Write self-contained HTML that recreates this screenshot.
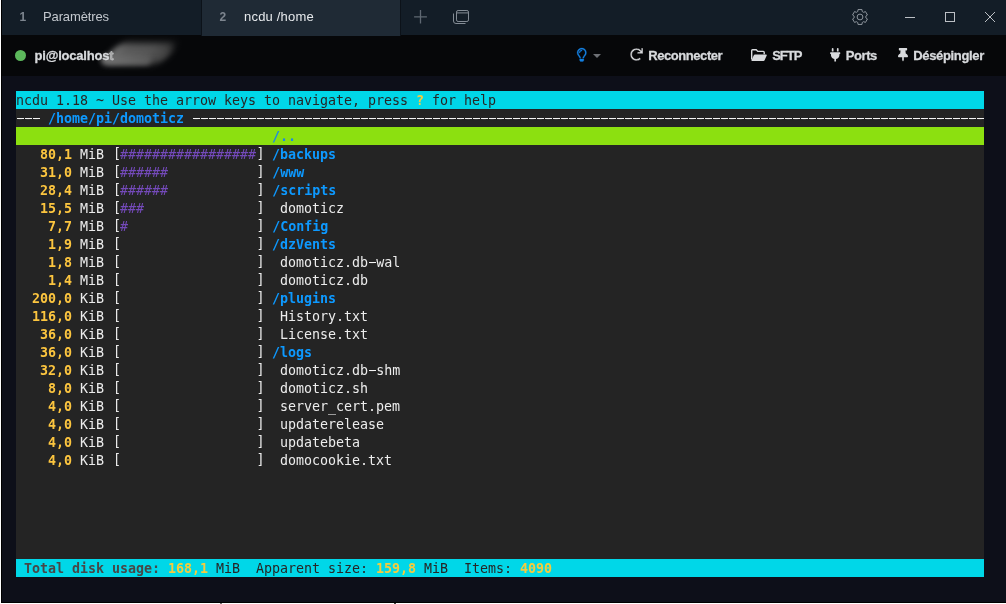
<!DOCTYPE html>
<html lang="fr">
<head>
<meta charset="utf-8">
<title>ncdu /home</title>
<style>
html,body{margin:0;padding:0;}
body{width:1006px;height:604px;overflow:hidden;background:#fff;position:relative;font-family:"Liberation Sans",sans-serif;}
#win{will-change:transform;position:absolute;left:1px;top:0;width:1005px;height:603px;background:#0d0f19;box-sizing:border-box;border-left:1px solid #000;border-bottom:1px solid #000;overflow:hidden;}
#tabs{position:absolute;left:0;top:0;width:1005px;height:35px;background:#131d27;}
.tab{position:absolute;top:0;height:35px;width:199px;color:#c3c8ce;font-size:13px;line-height:34px;}
.tab .n{position:absolute;left:17.500px;top:0;font-weight:bold;color:#7d858f;font-size:12px;}
.tab .t{position:absolute;top:0;white-space:nowrap;}
#t1{left:0px;}
#t1 .t{left:41px;letter-spacing:-0.12px;}
#t2{left:199px;width:198px;height:36px;z-index:2;background:#1f2a35;border-left:1px solid #0c1219;border-right:1px solid #0c1219;color:#e6e9ec;}
#t2 .t{left:42px;letter-spacing:0.2px;}
#bar{position:absolute;left:0;top:35px;width:1005px;height:41px;background:#060709;}
.tb{position:absolute;top:0;height:41px;line-height:41px;color:#d8dadd;font-weight:bold;font-size:13px;white-space:nowrap;-webkit-text-stroke:0.3px #d8dadd;}
#dot{position:absolute;left:13px;top:15px;width:11px;height:11px;border-radius:50%;background:#5cb85c;}
svg{position:absolute;overflow:visible;}
#smudge{position:absolute;left:107px;top:8px;width:62px;height:21px;filter:blur(3.600px);background:linear-gradient(90deg,#6e6e6e 0,#5c5c5c 25%,#545454 65%,#3c3c3c 100%);border-radius:10px;transform:skewX(-32deg);}
#smudge2{position:absolute;left:99px;top:20px;width:50px;height:10px;filter:blur(2.500px);background:linear-gradient(90deg,#747474,#5a5a5a);border-radius:5px;}
#term{position:absolute;left:14px;top:91px;width:968px;height:486px;background:#242424;color:#ececec;
 font-family:"DejaVu Sans Mono","Liberation Mono",monospace;font-size:13.3333px;letter-spacing:-0.0242px;line-height:20px;}
.r{height:18px;white-space:pre;overflow:hidden;}
.r b{font-weight:bold;}
.hd{background:#00d7e8;color:#262626;}
.q{color:#f4cc3e;}
.tt{color:#474747;}
.d{color:#0d99ff;}
.d2{color:#1e88e5;}
.sel{background:#8ce010;}
.s{color:#fcc53f;}
.g{color:#744aba;}
.r i{font-style:normal;position:relative;top:-1px;}
.lb{left:1px;}
.rb{left:.5px;}
.dash{position:relative;color:#8c8c8c;}
.dash::after{content:"";position:absolute;left:0;width:100%;top:7px;height:1px;background:linear-gradient(90deg,transparent 0,transparent 1px,#f4f4f4 1px) 0 0/8px 1px repeat-x;}
</style>
</head>
<body>
<div id="win">
 <div id="tabs">
  <div class="tab" id="t1"><span class="n">1</span><span class="t">Paramètres</span></div>
  <div class="tab" id="t2"><span class="n">2</span><span class="t">ncdu /home</span></div>
  <!-- plus -->
  <svg style="left:412px;top:10px" width="14" height="14" viewBox="0 0 14 14"><path d="M6.5 0V13.6M0.1 6.8H12.9" stroke="#5f6872" stroke-width="1.3" fill="none"/></svg>
  <!-- tab list -->
  <svg style="left:450px;top:9px" width="18" height="16" viewBox="0 0 18 16" fill="none" stroke="#848c95" stroke-width="1"><rect x="4.5" y="1.5" width="12" height="11" rx="1.6"/><path d="M4.5 3.9H16.5" /><path d="M1.5 4.5V12a2.5 2.5 0 0 0 2.5 2.5H13.5"/></svg>
  <!-- gear -->
  <svg style="left:850px;top:9px" width="16" height="16" viewBox="0 0 16 16" fill="none" stroke="#8d949c" stroke-width="1" stroke-linejoin="round"><path d="M5.79 2.53L6.01 0.56L9.99 0.56L10.21 2.53A5.9 5.9 0 0 1 11.63 3.35L13.44 2.56L15.44 6.01L13.84 7.18A5.9 5.9 0 0 1 13.84 8.82L15.44 9.99L13.44 13.44L11.63 12.65A5.9 5.9 0 0 1 10.21 13.47L9.99 15.44L6.01 15.44L5.79 13.47A5.9 5.9 0 0 1 4.37 12.65L2.56 13.44L0.56 9.99L2.16 8.82A5.9 5.9 0 0 1 2.16 7.18L0.56 6.01L2.56 2.56L4.37 3.35A5.9 5.9 0 0 1 5.79 2.53Z"/><circle cx="8" cy="8" r="2.9"/></svg>
  <!-- window controls -->
  <svg style="left:903px;top:12px" width="92" height="12" viewBox="0 0 92 12" fill="none" stroke="#bcc0c5" stroke-width="1"><path d="M0 5.5H10"/><rect x="40.5" y="0.5" width="9" height="9"/><path d="M80 0L90 10M90 0L80 10"/></svg>
 </div>
 <div id="bar">
  <div id="dot"></div>
  <div id="smudge"></div><div id="smudge2"></div>
  <div class="tb" style="left:32.5px;letter-spacing:-0.2px">pi@localhos<span style="color:#a4a4a4">t</span></div>
  <!-- lightbulb -->
  <svg style="left:574.800px;top:13.200px" width="9.500" height="13.600" viewBox="0 0 352 512" fill="#147fe0" stroke="#147fe0" stroke-width="10"><path d="M176 80c-52.940 0-96 43.060-96 96 0 8.840 7.160 16 16 16s16-7.160 16-16c0-35.300 28.720-64 64-64 8.840 0 16-7.160 16-16s-7.160-16-16-16zM96.060 459.170c0 3.150.93 6.220 2.680 8.840l24.510 36.840c2.970 4.460 7.970 7.140 13.320 7.140h78.850c5.360 0 10.360-2.680 13.320-7.140l24.510-36.840c1.740-2.620 2.670-5.700 2.680-8.840l.05-43.180H96.020l.04 43.180zM176 0C73.720 0 0 82.970 0 176c0 44.370 16.450 84.850 43.560 115.780 16.640 18.990 42.740 58.800 52.420 92.160v.06h48v-.12c-.01-4.770-.72-9.510-2.150-14.070-5.590-17.810-22.820-64.770-62.170-109.670-20.540-23.430-31.520-53.150-31.610-84.140-.2-73.640 59.670-128 127.950-128 70.580 0 128 57.420 128 128 0 30.970-11.240 60.850-31.650 84.140-39.110 44.610-56.420 91.470-62.100 109.460a47.507 47.507 0 0 0-2.220 14.300v.1h48v-.05c9.680-33.370 35.780-73.180 52.420-92.160C335.550 260.850 352 220.370 352 176 352 78.800 273.200 0 176 0z"/></svg>
  <svg style="left:591px;top:19px" width="8" height="4" viewBox="0 0 9 4" preserveAspectRatio="none"><path d="M0 0H9L4.500 4Z" fill="#6d7075"/></svg>
  <!-- reconnect -->
  <svg style="left:628px;top:13px" width="13" height="13" viewBox="0 0 512 512" fill="#d8dadd" stroke="#060709" stroke-width="18"><path d="M500.330 0h-47.410a12 12 0 0 0-12 12.570l4 82.760A247.420 247.420 0 0 0 256 8C119.340 8 7.900 119.530 8 256.190 8.100 393.070 119.100 504 256 504a247.100 247.100 0 0 0 166.180-63.910 12 12 0 0 0 .48-17.430l-34-34a12 12 0 0 0-16.380-.55A176 176 0 1 1 402.100 157.800l-101.530-4.870a12 12 0 0 0-12.570 12v47.410a12 12 0 0 0 12 12h200.330a12 12 0 0 0 12-12V12a12 12 0 0 0-12-12z"/></svg>
  <div class="tb" style="left:646.300px;letter-spacing:-0.44px">Reconnecter</div>
  <!-- folder-open -->
  <svg style="left:749px;top:14px" width="16" height="12" viewBox="0 0 16 12"><path d="M0.700 10.500V1.500Q0.700 0.700 1.500 0.700H5.200L6.800 2.400H12.300Q13.200 2.400 13.200 3.300V5.300" fill="none" stroke="#d8dadd" stroke-width="1.400"/><path d="M3.900 5.500H15.200Q16.100 5.500 15.700 6.400L13.600 11.300Q13.300 12 12.500 12H1Q0.100 12 0.500 11.200L2.800 6.200Q3.100 5.500 3.900 5.500Z" fill="#d8dadd"/></svg>
  <div class="tb" style="left:770.200px;letter-spacing:-1px">SFTP</div>
  <!-- plug -->
  <svg style="left:828.300px;top:13px" width="10.400" height="13.600" viewBox="0 0 384 512" fill="#d8dadd"><path d="M320,32a32,32,0,0,0-64,0v96h64Zm48,128H16A16,16,0,0,0,0,176v32a16,16,0,0,0,16,16H32v32A160.070,160.070,0,0,0,160,412.800V512h64V412.800A160.070,160.070,0,0,0,352,256V224h16a16,16,0,0,0,16-16V176A16,16,0,0,0,368,160ZM128,32a32,32,0,0,0-64,0v96h64Z"/></svg>
  <div class="tb" style="left:843.700px;letter-spacing:-0.4px">Ports</div>
  <!-- thumbtack -->
  <svg style="left:896px;top:13px" width="10" height="13.300" viewBox="0 0 384 512" fill="#d8dadd"><path d="M298.028 214.267L285.793 96H328c13.255 0 24-10.745 24-24V24c0-13.255-10.745-24-24-24H56C42.745 0 32 10.745 32 24v48c0 13.255 10.745 24 24 24h42.207L85.972 214.267C37.465 236.820 0 277.261 0 328c0 13.255 10.745 24 24 24h136v104.007c0 1.242.289 2.467.845 3.578l24 48c2.941 5.882 11.364 5.893 14.311 0l24-48a8.008 8.008 0 0 0 .845-3.578V352h136c13.255 0 24-10.745 24-24 0-51.183-37.983-91.420-85.972-113.733z"/></svg>
  <div class="tb" style="left:911.200px;letter-spacing:-0.34px">Désépingler</div>
 </div>
 <div id="term">
<div class="r hd">ncdu 1.18 ~ Use the arrow keys to navigate, press <b class="q">?</b> for help</div>
<div class="r"><span class="dash">---</span> <b class="d">/home/pi/domoticz</b> <span class="dash">---------------------------------------------------------------------------------------------------</span></div>
<div class="r sel">                                <b class="d2">/..</b></div>
<div class="r">   <b class="s">80,1</b> MiB <i class="lb">[</i><span class="g">#################</span><i class="rb">]</i> <b class="d">/backups</b></div>
<div class="r">   <b class="s">31,0</b> MiB <i class="lb">[</i><span class="g">######</span>           <i class="rb">]</i> <b class="d">/www</b></div>
<div class="r">   <b class="s">28,4</b> MiB <i class="lb">[</i><span class="g">######</span>           <i class="rb">]</i> <b class="d">/scripts</b></div>
<div class="r">   <b class="s">15,5</b> MiB <i class="lb">[</i><span class="g">###</span>              <i class="rb">]</i>  domoticz</div>
<div class="r">    <b class="s">7,7</b> MiB <i class="lb">[</i><span class="g">#</span>                <i class="rb">]</i> <b class="d">/Config</b></div>
<div class="r">    <b class="s">1,9</b> MiB <i class="lb">[</i>                 <i class="rb">]</i> <b class="d">/dzVents</b></div>
<div class="r">    <b class="s">1,8</b> MiB <i class="lb">[</i>                 <i class="rb">]</i>  domoticz.db<span class="dash">-</span>wal</div>
<div class="r">    <b class="s">1,4</b> MiB <i class="lb">[</i>                 <i class="rb">]</i>  domoticz.db</div>
<div class="r">  <b class="s">200,0</b> KiB <i class="lb">[</i>                 <i class="rb">]</i> <b class="d">/plugins</b></div>
<div class="r">  <b class="s">116,0</b> KiB <i class="lb">[</i>                 <i class="rb">]</i>  History.txt</div>
<div class="r">   <b class="s">36,0</b> KiB <i class="lb">[</i>                 <i class="rb">]</i>  License.txt</div>
<div class="r">   <b class="s">36,0</b> KiB <i class="lb">[</i>                 <i class="rb">]</i> <b class="d">/logs</b></div>
<div class="r">   <b class="s">32,0</b> KiB <i class="lb">[</i>                 <i class="rb">]</i>  domoticz.db<span class="dash">-</span>shm</div>
<div class="r">    <b class="s">8,0</b> KiB <i class="lb">[</i>                 <i class="rb">]</i>  domoticz.sh</div>
<div class="r">    <b class="s">4,0</b> KiB <i class="lb">[</i>                 <i class="rb">]</i>  server_cert.pem</div>
<div class="r">    <b class="s">4,0</b> KiB <i class="lb">[</i>                 <i class="rb">]</i>  updaterelease</div>
<div class="r">    <b class="s">4,0</b> KiB <i class="lb">[</i>                 <i class="rb">]</i>  updatebeta</div>
<div class="r">    <b class="s">4,0</b> KiB <i class="lb">[</i>                 <i class="rb">]</i>  domocookie.txt</div>
<div class="r"> </div>
<div class="r"> </div>
<div class="r"> </div>
<div class="r"> </div>
<div class="r"> </div>
<div class="r hd ft"> <b class="tt">Total disk usage:</b> <b class="q">168,1</b> MiB  Apparent size: <b class="q">159,8</b> MiB  Items: <b class="q">4090</b></div>
 </div>
</div>
<div style="position:absolute;left:220px;top:603px;width:2px;height:1px;background:#777"></div>
<div style="position:absolute;left:394px;top:603px;width:1.5px;height:1px;background:#444"></div>
</body>
</html>
